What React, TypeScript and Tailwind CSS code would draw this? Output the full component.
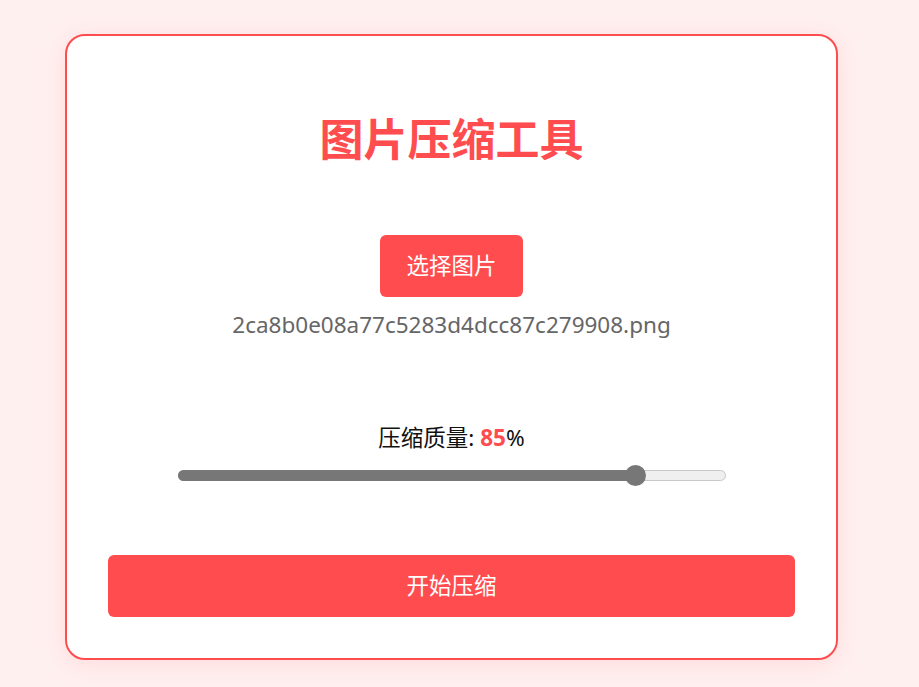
import { useState } from "react";

const FONT = { fontFamily: '"Segoe UI", "Noto Sans", "Noto Sans CJK SC", sans-serif' };

export default function App() {
  const [quality] = useState(85);
  // thumb is 21px wide, travel is track width minus thumb
  const pos = 10.5 + ((548 - 21) * quality) / 100;

  return (
    <div className="min-h-screen w-full bg-[#fff0f0] pt-[34px]" style={FONT}>
      <div className="ml-[65px] w-[773px] rounded-[20px] border-2 border-[#ff4d4f] bg-white px-[41px] pb-[41px] shadow-[0_4px_24px_rgba(255,77,79,0.12)] flex flex-col items-center text-[22.5px]">
        <h1 className="mt-[70px] text-[44px] leading-[66px] font-bold text-[#ff4d4f]">图片压缩工具</h1>

        <button className="mt-[63px] h-[62px] w-[143px] rounded-[6px] bg-[#ff4d4f] text-white text-[22.5px] flex items-center justify-center">
          选择图片
        </button>
        <div className="mt-[13px] leading-[30px] text-[#666] text-[22.5px]">2ca8b0e08a77c5283d4dcc87c279908.png</div>

        <div className="mt-[83px] leading-[30px] text-[#111] text-[22.5px]">
          压缩质量: <span className="font-bold text-[#ff4d4f]">{quality}</span>%
        </div>

        <div className="relative mt-[12px] h-[21px] w-[548px]">
          <div className="absolute left-0 right-0 top-[5px] h-[11px] rounded-full border border-[#c8c8c8] bg-[#efefef]" />
          <div className="absolute left-0 top-[5px] h-[11px] rounded-full bg-[#777]" style={{ width: pos }} />
          <div className="absolute top-0 h-[21px] w-[21px] rounded-full bg-[#777]" style={{ left: pos - 10.5 }} />
        </div>

        <button className="mt-[69px] h-[62px] w-full rounded-[6px] bg-[#ff4d4f] text-white text-[22.5px] flex items-center justify-center">
          开始压缩
        </button>
      </div>
    </div>
  );
}
